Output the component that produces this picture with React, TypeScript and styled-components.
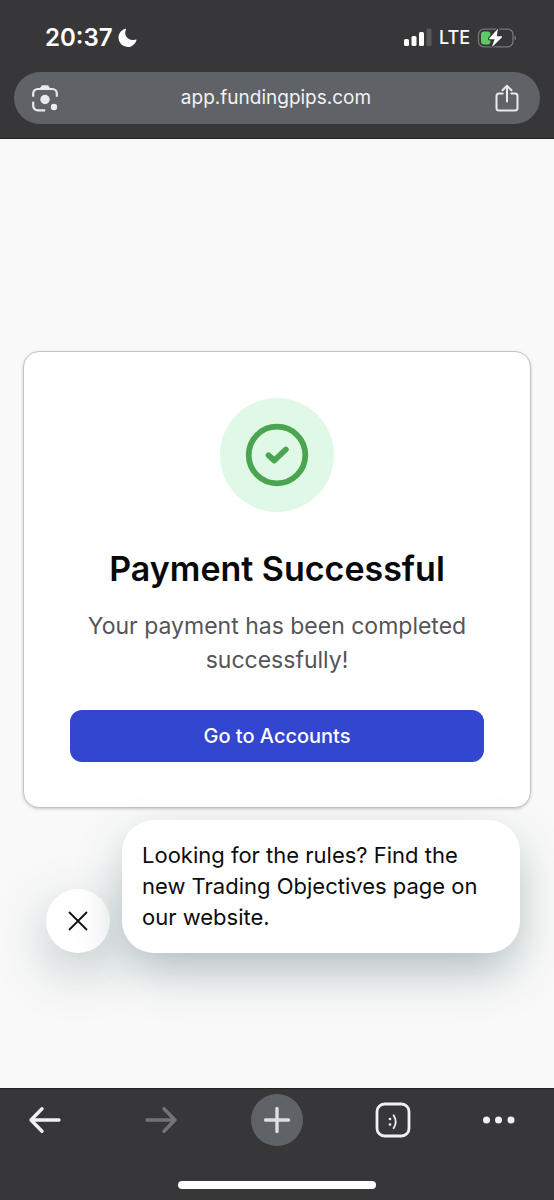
import React from "react";
import styled, { createGlobalStyle } from "styled-components";

const GlobalStyle = createGlobalStyle`
  *, *::before, *::after { box-sizing: border-box; }
  body {
    margin: 0;
    background: #f9f9f9;
    font-family: Inter, "Liberation Sans", sans-serif;
  }
  button { font: inherit; border: 0; padding: 0; background: none; cursor: pointer; }
  h1, p { margin: 0; }
  svg { display: block; }
`;

const Screen = styled.div`
  min-height: 100vh;
  display: flex;
  flex-direction: column;
`;

const TopChrome = styled.header`
  background: #373739;
  border-bottom: 1px solid #232325;
  padding: 0 14px 14px;
`;

const StatusBar = styled.div`
  display: flex;
  align-items: center;
  justify-content: space-between;
  height: 72px;
  padding: 3px 23px 0 31px;
  color: #fff;
`;

const StatusGroup = styled.div<{ $gap: number }>`
  display: flex;
  align-items: center;
  gap: ${(p) => p.$gap}px;
`;

const Clock = styled.time`
  font-size: 24px;
  font-weight: 600;
  line-height: 32px;
`;

const Network = styled.span`
  font-size: 18px;
  font-weight: 500;
  line-height: 24px;
`;

const AddressBar = styled.div`
  display: flex;
  align-items: center;
  justify-content: space-between;
  height: 52px;
  padding: 0 19px 0 17px;
  border-radius: 26px;
  background: #5f6266;
  color: #e8eaed;
`;

const Address = styled.button`
  color: #f1f3f4;
  font-size: 19px;
  line-height: 24px;
`;

const IconButton = styled.button`
  display: grid;
  place-items: center;
  color: inherit;
`;

const Page = styled.main`
  flex: 1;
  display: flex;
  flex-direction: column;
  gap: 12px;
  padding: 212px 23px 64px;
`;

const Card = styled.section`
  display: flex;
  flex-direction: column;
  align-items: center;
  padding: 46px 46px 45px;
  border: 1px solid #c4c4c6;
  border-radius: 16px;
  background: #fff;
  box-shadow: 0 1px 3px rgba(0, 0, 0, 0.2);
  text-align: center;
`;

const Badge = styled.div`
  display: grid;
  place-items: center;
  width: 114px;
  height: 114px;
  border-radius: 50%;
  background: #e0f9e7;
`;

const Title = styled.h1`
  margin-top: 35px;
  color: #09090b;
  font-size: 34px;
  font-weight: 600;
  line-height: 44px;
`;

const Message = styled.p`
  margin-top: 18px;
  color: #545459;
  font-size: 23px;
  line-height: 34px;
`;

const PrimaryButton = styled.button`
  align-self: stretch;
  height: 52px;
  margin-top: 33px;
  border-radius: 12px;
  background: #3346d0;
  color: #fff;
  font-size: 20px;
  font-weight: 500;
`;

const ChatPrompt = styled.aside`
  display: flex;
  align-items: flex-end;
  gap: 12px;
  padding: 0 11px 0 23px;
`;

const DismissButton = styled.button`
  display: grid;
  place-items: center;
  flex: none;
  width: 64px;
  height: 64px;
  border-radius: 50%;
  background: #fff;
  color: #111;
  box-shadow: 0 18px 54px -4px rgba(20, 65, 70, 0.36);
`;

const Bubble = styled.p`
  flex: 1;
  padding: 20px;
  border-radius: 32px;
  background: #fff;
  color: #0c0c0c;
  font-size: 22px;
  line-height: 31px;
  box-shadow: 0 20px 48px -4px rgba(20, 65, 70, 0.34);
`;

const BottomChrome = styled.footer`
  background: #373739;
  border-top: 1px solid #232325;
  color: #f1f1f3;
`;

const Toolbar = styled.nav`
  display: flex;
  align-items: center;
  justify-content: space-between;
  height: 62px;
  padding: 0 19px;
`;

const ToolButton = styled(IconButton)<{ $dim?: boolean; $align?: "start" }>`
  width: 52px;
  height: 52px;
  justify-items: ${(p) => p.$align ?? "center"};
  color: ${(p) => (p.$dim ? "#747477" : "#f1f1f3")};
`;

const NewTabButton = styled(ToolButton)`
  border-radius: 50%;
  background: #5f6266;
  color: #dcdee3;
`;

const HomeIndicator = styled.div`
  width: 198px;
  height: 8px;
  margin: 30px auto 11px;
  border-radius: 4px;
  background: #fff;
`;

const Moon = () => (
  <svg width="20" height="20" viewBox="0 0 20 20" fill="currentColor" aria-hidden="true">
    <path d="M7.300.8C3 2.200.5 5.600.5 9.800A9.200 9.200 0 0 0 9.700 19C13.600 19 17 16.400 18.400 12.400C18.700 11.700 18.100 11.200 17.400 11.500C11 13.800 5.200 8 7.900 1.800C8.200 1.100 7.900.6 7.300.8z" />
  </svg>
);

const Signal = () => (
  <svg width="28" height="19" viewBox="0 0 28 19" fill="currentColor" aria-hidden="true">
    <rect x="0" y="11" width="5" height="7" rx="1.500" />
    <rect x="7.500" y="8" width="5" height="10" rx="1.500" />
    <rect x="15" y="4" width="5" height="14" rx="1.500" />
    <rect x="22.500" y="0.500" width="5" height="17.500" rx="1.500" fill="#59595c" />
  </svg>
);

const Battery = () => (
  <svg width="40" height="20" viewBox="0 0 40 20" aria-hidden="true">
    <rect x="1.500" y="1.200" width="34.500" height="17.600" rx="5.200" fill="none" stroke="#77777a" strokeWidth="1.300" />
    <path d="M37.500 7.500c2.100.7 2.100 4.300 0 5z" fill="#77777a" />
    <rect x="4" y="3.600" width="9.500" height="12.800" rx="3" fill="#5dca62" />
    <path
      d="M20.900.8 12.300 10.300c-.4.600-.1 1 .500 1h4.800L14.800 19.200 24.800 9.400c.5-.6.200-1.100-.500-1.100h-4.500z"
      fill="#fff"
      stroke="#373739"
      strokeWidth="2.400"
      paintOrder="stroke"
    />
  </svg>
);

const Lens = () => (
  <svg width="28" height="28" viewBox="0 0 28 28" fill="none" aria-hidden="true">
    <path
      d="M2.200 12.700V9.500a4.500 4.500 0 0 1 4.500-4.500h14.600a4.500 4.500 0 0 1 4.500 4.500v3.200M2.200 17.800v4a4.500 4.500 0 0 0 4.500 4.500h7.500"
      stroke="currentColor"
      strokeWidth="2.200"
    />
    <path d="M8.200 5.200 10 2.400Q10.700 1.200 12 1.200h4q1.300 0 2 1.200l1.800 2.800z" fill="currentColor" />
    <circle cx="14" cy="15.500" r="4.700" fill="currentColor" />
    <circle cx="23" cy="23" r="3.200" fill="currentColor" />
  </svg>
);

const Share = () => (
  <svg
    width="28"
    height="28"
    viewBox="0 0 28 28"
    fill="none"
    stroke="currentColor"
    strokeWidth="2"
    strokeLinecap="round"
    strokeLinejoin="round"
    aria-hidden="true"
  >
    <path d="M9.700 9.500H6A2.500 2.500 0 0 0 3.500 12v12A2.500 2.500 0 0 0 6 26.500h16a2.500 2.500 0 0 0 2.500-2.500V12A2.500 2.500 0 0 0 22 9.500h-3.700" />
    <path d="M14 17.500V2M9.500 6.300 14 1.800l4.500 4.500" />
  </svg>
);

const CheckCircle = () => (
  <svg
    width="64"
    height="64"
    viewBox="0 0 64 64"
    fill="none"
    stroke="#4ba450"
    strokeWidth="5.800"
    strokeLinecap="round"
    strokeLinejoin="round"
    aria-hidden="true"
  >
    <circle cx="32" cy="32" r="28.300" />
    <path d="m23.600 32.300 5.700 5.200L40.800 26.500" />
  </svg>
);

const Close = () => (
  <svg width="20" height="20" viewBox="0 0 20 20" stroke="currentColor" strokeWidth="1.800" strokeLinecap="round" aria-hidden="true">
    <path d="m1.500 1.500 17 17m0-17-17 17" />
  </svg>
);

const Arrow = ({ forward }: { forward?: boolean }) => (
  <svg
    width="34"
    height="28"
    viewBox="0 0 34 28"
    fill="none"
    stroke="currentColor"
    strokeWidth="3.400"
    strokeLinecap="round"
    strokeLinejoin="round"
    aria-hidden="true"
  >
    <path d={forward ? "M3 14h28M20 2.800 31 14 20 25.200" : "M31 14H3M14 2.800 3 14l11 11.200"} />
  </svg>
);

const Plus = () => (
  <svg width="28" height="28" viewBox="0 0 28 28" stroke="currentColor" strokeWidth="3.400" strokeLinecap="round" aria-hidden="true">
    <path d="M14 2.500v23M2.500 14h23" />
  </svg>
);

const Tabs = () => (
  <svg width="36" height="36" viewBox="0 0 36 36" fill="none" stroke="currentColor" aria-hidden="true">
    <rect x="2" y="2" width="32" height="32" rx="7.500" strokeWidth="2.800" />
    <circle cx="15" cy="17" r="1.300" fill="currentColor" stroke="none" />
    <circle cx="15" cy="22.500" r="1.300" fill="currentColor" stroke="none" />
    <path d="M18.600 13.200q4.200 6.500 0 13" strokeWidth="1.800" strokeLinecap="round" />
  </svg>
);

const More = () => (
  <svg width="34" height="10" viewBox="0 0 34 10" fill="currentColor" aria-hidden="true">
    <circle cx="3.500" cy="5" r="3.500" />
    <circle cx="15.500" cy="5" r="3.500" />
    <circle cx="28" cy="5" r="3.500" />
  </svg>
);

export default function App() {
  return (
    <Screen>
      <GlobalStyle />
      <TopChrome>
        <StatusBar>
          <StatusGroup $gap={5}>
            <Clock>20:37</Clock>
            <Moon />
          </StatusGroup>
          <StatusGroup $gap={7}>
            <Signal />
            <Network>LTE</Network>
            <Battery />
          </StatusGroup>
        </StatusBar>
        <AddressBar>
          <IconButton aria-label="Search with camera">
            <Lens />
          </IconButton>
          <Address>app.fundingpips.com</Address>
          <IconButton aria-label="Share">
            <Share />
          </IconButton>
        </AddressBar>
      </TopChrome>

      <Page>
        <Card>
          <Badge>
            <CheckCircle />
          </Badge>
          <Title>Payment Successful</Title>
          <Message>Your payment has been completed successfully!</Message>
          <PrimaryButton>Go to Accounts</PrimaryButton>
        </Card>
        <ChatPrompt>
          <DismissButton aria-label="Dismiss message">
            <Close />
          </DismissButton>
          <Bubble>Looking for the rules? Find the new Trading Objectives page on our website.</Bubble>
        </ChatPrompt>
      </Page>

      <BottomChrome>
        <Toolbar aria-label="Browser toolbar">
          <ToolButton aria-label="Back">
            <Arrow />
          </ToolButton>
          <ToolButton aria-label="Forward" $dim>
            <Arrow forward />
          </ToolButton>
          <NewTabButton aria-label="New tab">
            <Plus />
          </NewTabButton>
          <ToolButton aria-label="Show tabs">
            <Tabs />
          </ToolButton>
          <ToolButton aria-label="More options" $align="start">
            <More />
          </ToolButton>
        </Toolbar>
        <HomeIndicator />
      </BottomChrome>
    </Screen>
  );
}
